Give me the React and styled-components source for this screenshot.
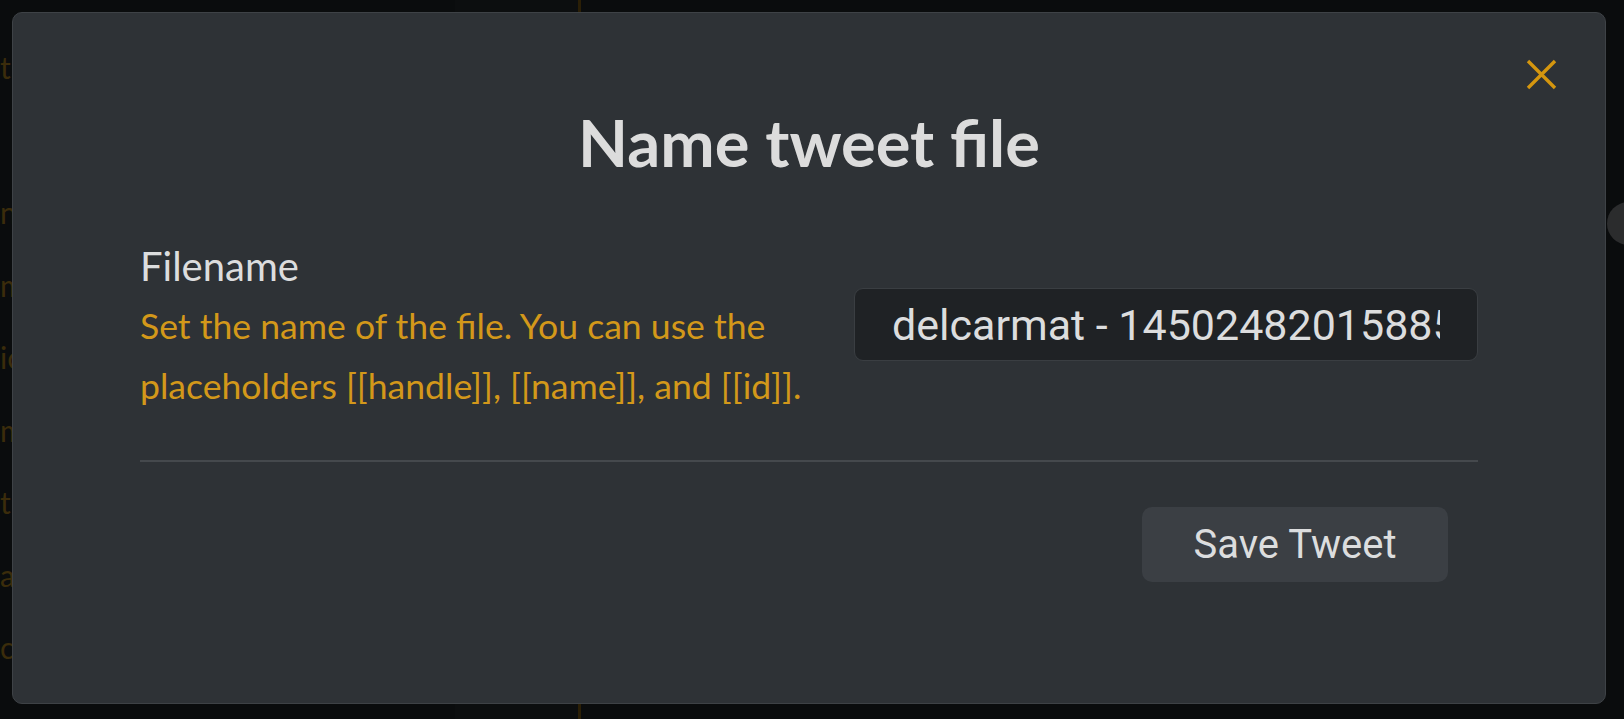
import React from "react";
import styled, { createGlobalStyle } from "styled-components";

const GlobalStyle = createGlobalStyle`
  html, body {
    margin: 0;
    padding: 0;
    background: #0a0c0d;
    overflow: hidden;
  }
  * { box-sizing: border-box; }
`;

const Page = styled.div`
  position: relative;
  width: 100vw;
  height: 100vh;
  display: flex;
  overflow: hidden;
  background: #0a0c0d;
`;

const Sidebar = styled.div`
  width: 455px;
  display: flex;
  flex-direction: column;
  padding-top: 47px;
  font-family: "Lato", "Liberation Sans", sans-serif;
  font-size: 30px;
  color: #3b2c0b;
`;

const SideItem = styled.div`
  margin-top: ${(p) => p.$gap}px;
  line-height: 40px;
  white-space: nowrap;
`;

const SidePanel = styled.div`
  width: 126px;
  background: #0c0e0f;
  border-right: 3px solid #2b1f06;
`;

const Main = styled.div`
  flex: 1;
`;

const FloatingBall = styled.div`
  position: absolute;
  left: 1607px;
  top: 202px;
  width: 43px;
  height: 43px;
  border-radius: 50%;
  background: #2b2c2d;
`;

const Modal = styled.div`
  position: absolute;
  top: 12px;
  left: 12px;
  width: 1594px;
  height: 692px;
  background: #2e3236;
  border: 1px solid #3e4246;
  border-radius: 10px;
  padding: 90px 127px 0 127px;
  display: flex;
  flex-direction: column;
`;

const CloseButton = styled.button`
  position: absolute;
  top: 46px;
  right: 48px;
  width: 31px;
  height: 31px;
  padding: 0;
  border: none;
  background: transparent;
  cursor: pointer;
  display: flex;
`;

const Title = styled.h1`
  margin: 0;
  text-align: center;
  font-family: "Lato", "Liberation Sans", sans-serif;
  font-weight: 700;
  font-size: 65px;
  line-height: 78px;
  color: #dcdcdc;
`;

const SettingRow = styled.div`
  margin-top: 61px;
  display: flex;
  align-items: center;
  gap: 40px;
`;

const Info = styled.div`
  flex: 1;
  min-width: 0;
`;

const Label = styled.div`
  font-family: "Lato", "Liberation Sans", sans-serif;
  font-size: 40px;
  line-height: 48px;
  color: #dcddde;
  margin-bottom: 6px;
`;

const Description = styled.div`
  font-family: "Lato", "Liberation Sans", sans-serif;
  font-size: 35.6px;
  line-height: 60px;
  color: #d3981a;
`;

const TextInput = styled.input`
  width: 624px;
  height: 73px;
  flex: none;
  margin-bottom: 9px;
  padding: 0 37px;
  background: #1f2225;
  border: 1px solid #3a3e42;
  border-radius: 9px;
  color: #dcddde;
  font-family: "Roboto", "Liberation Sans", sans-serif;
  font-size: 43px;
  outline: none;
`;

const Divider = styled.div`
  margin-top: 44px;
  border-top: 2px solid #45494d;
`;

const ButtonRow = styled.div`
  display: flex;
  justify-content: flex-end;
  padding-right: 30px;
  margin-top: 45px;
`;

const Button = styled.button`
  width: 306px;
  height: 75px;
  border: none;
  border-radius: 10px;
  background: #3b3f44;
  color: #dcddde;
  font-family: "Roboto", "Liberation Sans", sans-serif;
  font-size: 40px;
  cursor: pointer;
`;

const sideItems = [
  { t: "ts", gap: 0 },
  { t: "n", gap: 105 },
  { t: "m", gap: 33 },
  { t: "ic", gap: 32 },
  { t: "m", gap: 33 },
  { t: "t", gap: 32 },
  { t: "a", gap: 33 },
  { t: "cr", gap: 32 },
];

export default function App() {
  return (
    <>
      <GlobalStyle />
      <Page>
        <Sidebar>
          {sideItems.map((s, i) => (
            <SideItem key={i} $gap={s.gap}>
              {s.t}
            </SideItem>
          ))}
        </Sidebar>
        <SidePanel />
        <Main />
        <FloatingBall />
        <Modal>
          <CloseButton aria-label="Close">
            <svg width="31" height="31" viewBox="0 0 31 31">
              <path
                d="M2 2 L29 29 M29 2 L2 29"
                stroke="#d4960f"
                strokeWidth="3.4"
                strokeLinecap="butt"
                fill="none"
              />
            </svg>
          </CloseButton>
          <Title>Name tweet file</Title>
          <SettingRow>
            <Info>
              <Label>Filename</Label>
              <Description>
                Set the name of the file. You can use the placeholders
                [[handle]], [[name]], and [[id]].
              </Description>
            </Info>
            <TextInput defaultValue="delcarmat - 1450248201588535297" />
          </SettingRow>
          <Divider />
          <ButtonRow>
            <Button>Save Tweet</Button>
          </ButtonRow>
        </Modal>
      </Page>
    </>
  );
}
